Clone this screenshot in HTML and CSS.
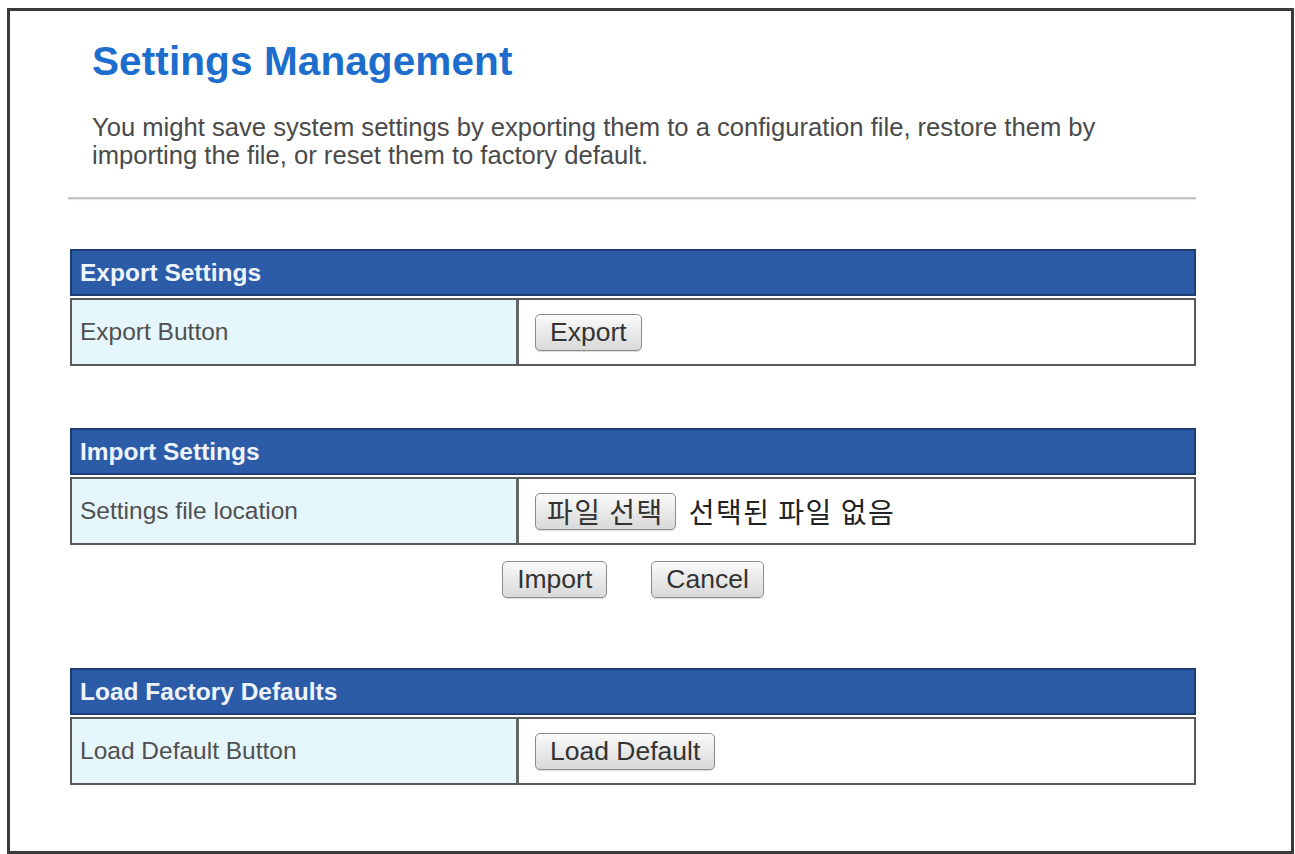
FILE: index.html
```html
<!DOCTYPE html>
<html lang="en">
  <head>
    <meta charset="UTF-8" />
    <meta name="viewport" content="width=device-width, initial-scale=1.0" />
    <title>Settings Management</title>
    <link rel="stylesheet" href="styles.css">
  </head>
  <body>
    <div class="frame">
      <div class="content">
        <h1 class="title">Settings Management</h1>
        <p class="desc">
          You might save system settings by exporting them to a configuration file, restore them by<br>
          importing the file, or reset them to factory default.
        </p>
        <div class="rule"></div>

        <div class="section first">
          <div class="section-head">Export Settings</div>
          <div class="section-row">
            <div class="label">Export Button</div>
            <div class="value">
              <button class="btn">Export</button>
            </div>
          </div>
        </div>

        <div class="section">
          <div class="section-head">Import Settings</div>
          <div class="section-row">
            <div class="label">Settings file location</div>
            <div class="value">
              <button class="btn ko">파일 선택</button>
              <span class="no-file">선택된 파일 없음</span>
            </div>
          </div>
          <div class="actions">
            <button class="btn">Import</button>
            <button class="btn">Cancel</button>
          </div>
        </div>

        <div class="section last">
          <div class="section-head">Load Factory Defaults</div>
          <div class="section-row">
            <div class="label">Load Default Button</div>
            <div class="value">
              <button class="btn">Load Default</button>
            </div>
          </div>
        </div>
      </div>
    </div>
  </body>
</html>
```

FILE: styles.css
```css
body {
  margin: 0;
  background: #fff;
  font-family: "Liberation Sans", Arial, "Noto Sans CJK KR", sans-serif;
  color: #444;
}

.frame {
  box-sizing: border-box;
  height: 846px;
  margin: 8px 1px 0 7px;
  border: 3px solid #3a3a3a;
  overflow: hidden;
}

.content {
  width: 1128px;
  margin-left: 58px;
}

.title {
  margin: 0;
  padding: 28px 0 0 24px;
  font-size: 40.5px;
  line-height: 44px;
  font-weight: bold;
  color: #1c6dcc;
  letter-spacing: 0.1px;
}

.desc {
  margin: 0;
  padding: 30px 0 0 24px;
  font-size: 25.6px;
  line-height: 28px;
  color: #4a4a4a;
}

.rule {
  height: 2px;
  margin-top: 28px;
  background: #c6c6c6;
  box-shadow: 0 1px 1px #e4e4e4;
}

.section {
  margin: 0 0 0 2px;
  width: 1126px;
}

.section.first {
  margin-top: 50px;
}

.section + .section {
  margin-top: 62px;
}

.section.last {
  margin-top: 70px;
}

.section-head {
  box-sizing: border-box;
  height: 47px;
  padding-left: 8px;
  background: #2c5ca8;
  border: 2px solid #1d3c73;
  color: #eef4fc;
  font-size: 24.5px;
  font-weight: bold;
  line-height: 43px;
}

.section-row {
  box-sizing: border-box;
  display: grid;
  grid-template-columns: 447px 1fr;
  height: 68px;
  margin-top: 2px;
  border: 2px solid #5a5a5a;
}

.label {
  display: flex;
  align-items: center;
  padding-left: 8px;
  background: #e6f6fd;
  border-right: 3px solid #666;
  font-size: 24.5px;
  color: #505050;
}

.value {
  display: flex;
  align-items: center;
  gap: 13px;
  padding-left: 16px;
  background: #fff;
}

.btn {
  box-sizing: border-box;
  height: 37px;
  padding: 0 14px;
  border: 1px solid #8c8c8c;
  border-radius: 5px;
  background: linear-gradient(#fbfbfb, #e9e9e9 50%, #d9d9d9);
  box-shadow: 0 1px 1px rgba(0, 0, 0, 0.15);
  font-family: inherit;
  font-size: 26.5px;
  color: #333;
  line-height: 33px;
}

.btn.ko,
.no-file {
  font-family: "Noto Sans CJK KR", sans-serif;
  font-size: 28px;
  letter-spacing: 1.5px;
  line-height: 33px;
}

.btn.ko {
  padding: 0 11px;
}

.no-file {
  color: #222;
}

.actions {
  display: flex;
  justify-content: center;
  gap: 44px;
  margin-top: 16px;
}
```
